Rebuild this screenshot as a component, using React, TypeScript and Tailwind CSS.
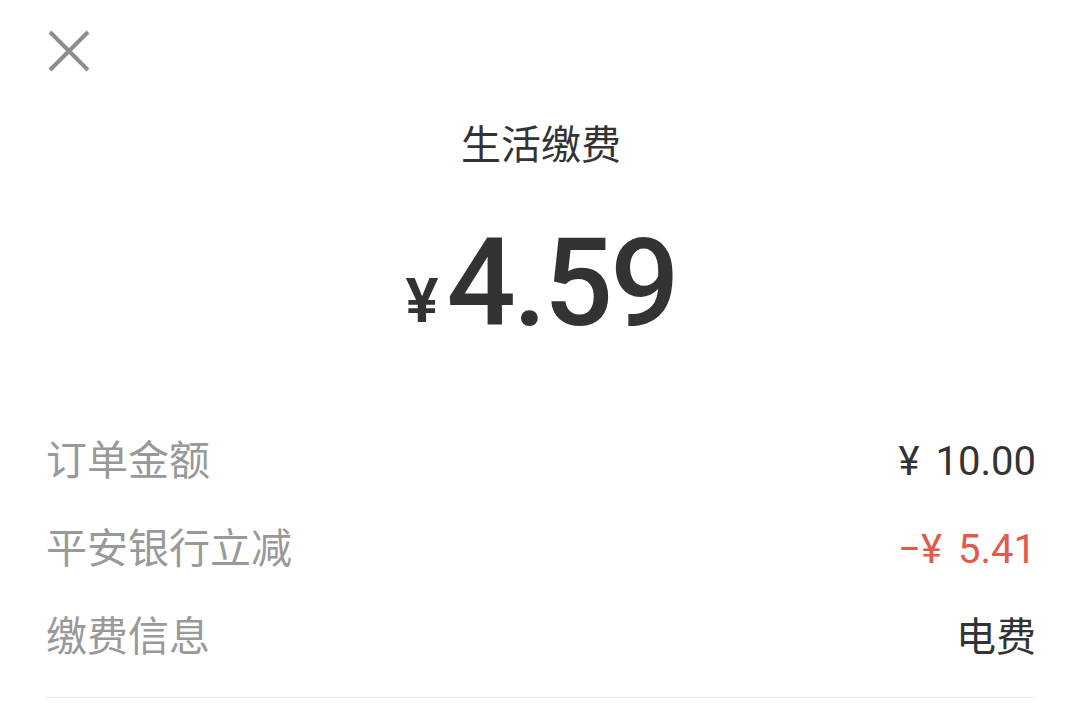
import { useState } from 'react';

const rows = [
  { label: '订单金额', value: '¥ 10.00', tone: 'text-[#333333]' },
  { label: '平安银行立减', value: '−¥ 5.41', tone: 'text-[#e45a4a]' },
  { label: '缴费信息', value: '电费', tone: 'text-[#333333]' },
];

function CloseIcon() {
  return (
    <svg viewBox="0 0 42 42" className="w-[42px] h-[42px]">
      <path d="M2 2 L40 40 M40 2 L2 40" stroke="#8c8c8c" strokeWidth="4" fill="none" />
    </svg>
  );
}

export default function App() {
  const [open] = useState(true);

  return (
    <div
      className="w-[1080px] h-[714px] bg-white overflow-hidden"
      style={{ fontFamily: 'Roboto, "Noto Sans CJK SC", sans-serif' }}
    >
      {open && (
        <div className="pl-[46px] pr-[44px]">
          {/* 关闭按钮 */}
          <div className="pt-[30px] pl-[2px]">
            <CloseIcon />
          </div>

          {/* 标题 */}
          <div className="mt-[54px] text-center text-[40px] leading-[40px] text-[#333333]">
            生活缴费
          </div>

          {/* 金额 */}
          <div className="mt-[57px] flex items-baseline justify-center text-[#333333]">
            <span className="text-[62px] leading-none font-semibold mr-[8px] relative -top-[3px]">¥</span>
            <span className="text-[122px] leading-none font-medium tracking-[-3px]">4.59</span>
          </div>

          {/* 明细 */}
          <div className="mt-[73px]">
            {rows.map((row) => (
              <div key={row.label} className="flex items-center justify-between h-[88px]">
                <span className="text-[#999999] text-[41px]">{row.label}</span>
                <span className={`${row.tone} text-[40px]`} style={{ wordSpacing: '6px' }}>
                  {row.value}
                </span>
              </div>
            ))}
          </div>

          <div className="mt-[15px] border-t border-[#ececec]" />
        </div>
      )}
    </div>
  );
}
